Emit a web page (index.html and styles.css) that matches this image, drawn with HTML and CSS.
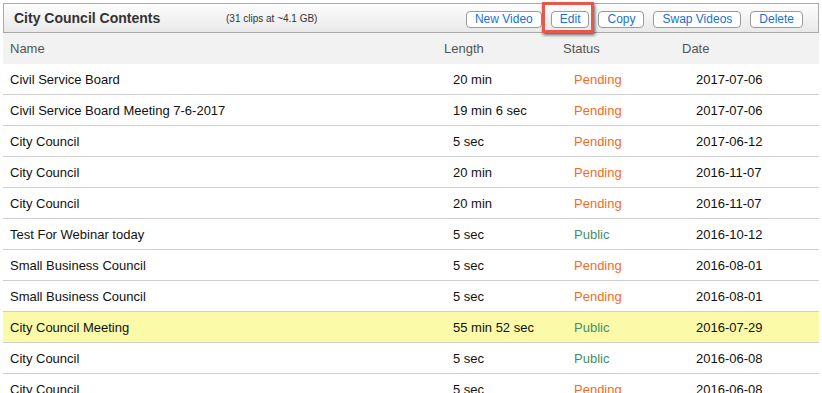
FILE: index.html
```html
<!DOCTYPE html>
<html lang="en">
<head>
  <meta charset="UTF-8" />
  <title>City Council Contents</title>
  <link rel="stylesheet" href="styles.css">
</head>
<body>
  <div class="panel">
    <div class="panel-head">
      <h2>City Council Contents</h2>
      <span class="summary">(31 clips at ~4.1 GB)</span>
      <div class="actions">
        <button>New Video</button>
        <span class="callout"><button>Edit</button></span>
        <button>Copy</button>
        <button>Swap Videos</button>
        <button>Delete</button>
      </div>
    </div>

    <table class="clips">
      <colgroup>
        <col class="c-name"><col class="c-len"><col class="c-status"><col class="c-date">
      </colgroup>
      <thead>
        <tr><th>Name</th><th>Length</th><th>Status</th><th>Date</th></tr>
      </thead>
      <tbody>
        <tr><td>Civil Service Board</td><td class="len">20 min</td><td class="st pending">Pending</td><td class="dt">2017-07-06</td></tr>
        <tr><td>Civil Service Board Meeting 7-6-2017</td><td class="len">19 min 6 sec</td><td class="st pending">Pending</td><td class="dt">2017-07-06</td></tr>
        <tr><td>City Council</td><td class="len">5 sec</td><td class="st pending">Pending</td><td class="dt">2017-06-12</td></tr>
        <tr><td>City Council</td><td class="len">20 min</td><td class="st pending">Pending</td><td class="dt">2016-11-07</td></tr>
        <tr><td>City Council</td><td class="len">20 min</td><td class="st pending">Pending</td><td class="dt">2016-11-07</td></tr>
        <tr><td>Test For Webinar today</td><td class="len">5 sec</td><td class="st public">Public</td><td class="dt">2016-10-12</td></tr>
        <tr><td>Small Business Council</td><td class="len">5 sec</td><td class="st pending">Pending</td><td class="dt">2016-08-01</td></tr>
        <tr><td>Small Business Council</td><td class="len">5 sec</td><td class="st pending">Pending</td><td class="dt">2016-08-01</td></tr>
        <tr class="selected"><td>City Council Meeting</td><td class="len">55 min 52 sec</td><td class="st public">Public</td><td class="dt">2016-07-29</td></tr>
        <tr><td>City Council</td><td class="len">5 sec</td><td class="st public">Public</td><td class="dt">2016-06-08</td></tr>
        <tr><td>City Council</td><td class="len">5 sec</td><td class="st pending">Pending</td><td class="dt">2016-06-08</td></tr>
      </tbody>
    </table>
  </div>
</body>
</html>
```

FILE: styles.css
```css
body {
  font-family: 'Liberation Sans', Arial, sans-serif;
  background: #fff;
  margin: 0;
  padding: 3px 3px 0 3px;
  color: #111;
}
.panel {
  width: 816px;
}
.panel-head {
  display: flex;
  align-items: center;
  height: 28px;
  border: 1px solid #a9a9a9;
  background: linear-gradient(#fdfdfd, #e9e9e9);
}
h2 {
  margin: 0 0 0 10px;
  font-size: 14px;
  color: #333;
  width: 212px;
}
.summary {
  font-size: 10px;
  color: #333;
}
.actions {
  display: flex;
  align-items: center;
  gap: 9px;
  margin-left: auto;
  margin-right: 15px;
  padding-top: 2px;
}
button {
  font-family: inherit;
  font-size: 12px;
  color: #1b6fd1;
  background: #fff;
  border: 1px solid #9a9a9a;
  border-radius: 4px;
  height: 17px;
  padding: 0 8px;
  line-height: 15px;
}
.callout {
  position: relative;
  display: flex;
}
.callout::after {
  content: "";
  position: absolute;
  left: -9px;
  top: -9px;
  right: -5px;
  bottom: -5px;
  border: 3px solid #e8574b;
  box-shadow: 1px 2px 3px rgba(0,0,0,0.6);
}
.clips {
  width: 816px;
  border-collapse: collapse;
  table-layout: fixed;
  font-size: 13px;
}
.c-name { width: 434px; }
.c-len { width: 119px; }
.c-status { width: 119px; }
.c-date { width: 144px; }
th {
  text-align: left;
  font-weight: normal;
  color: #555;
  background: #f2f2f2;
  height: 31px;
  padding: 0 0 0 7px;
}
td {
  height: 30px;
  padding: 0 0 0 7px;
  border-bottom: 1px solid #cfcfcf;
  white-space: nowrap;
}
td.len { padding-left: 16px; }
td.st { padding-left: 18px; }
td.dt { padding-left: 21px; }
.pending { color: #f66a1f; }
.public { color: #3f8f6c; }
tr.selected td {
  background: #fafaa9;
}
```
